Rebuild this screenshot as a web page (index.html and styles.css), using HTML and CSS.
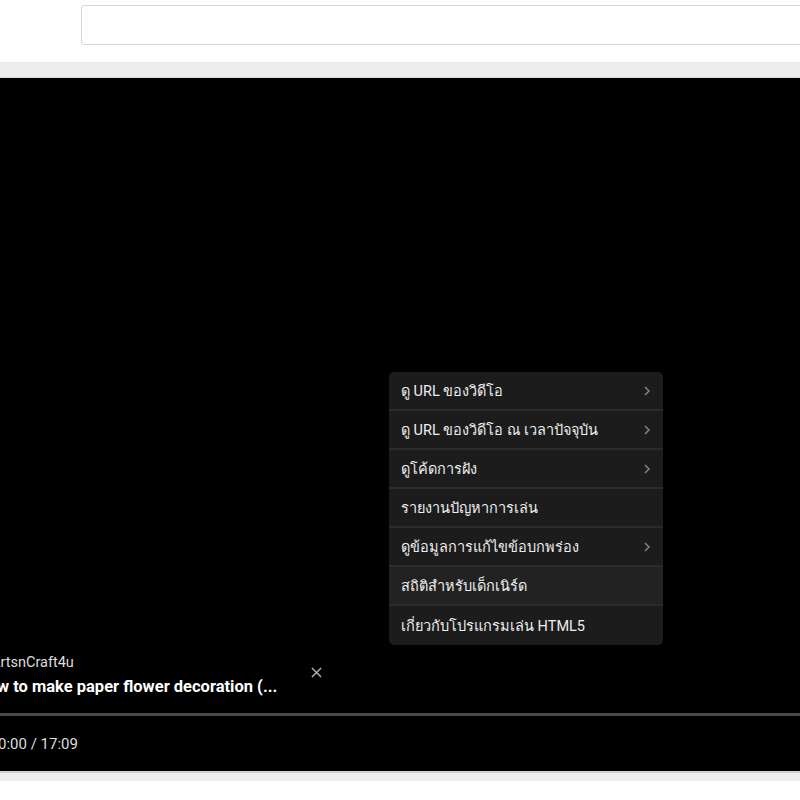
FILE: index.html
```html
<!DOCTYPE html>
<html lang="th">
<head>
<meta charset="utf-8">
<link rel="stylesheet" href="styles.css">
</head>
<body>
<div class="top">
  <div class="search"></div>
</div>
<div class="band"></div>
<div class="player">
  <div class="menu">
    <div class="item"><span>ดู URL ของวิดีโอ</span><svg class="chev" viewBox="0 0 8 12"><polyline points="2,2 6,6 2,10"/></svg></div>
    <div class="item"><span>ดู URL ของวิดีโอ ณ เวลาปัจจุบัน</span><svg class="chev" viewBox="0 0 8 12"><polyline points="2,2 6,6 2,10"/></svg></div>
    <div class="item"><span>ดูโค้ดการฝัง</span><svg class="chev" viewBox="0 0 8 12"><polyline points="2,2 6,6 2,10"/></svg></div>
    <div class="item"><span>รายงานปัญหาการเล่น</span></div>
    <div class="item"><span>ดูข้อมูลการแก้ไขข้อบกพร่อง</span><svg class="chev" viewBox="0 0 8 12"><polyline points="2,2 6,6 2,10"/></svg></div>
    <div class="item hover"><span>สถิติสำหรับเด็กเนิร์ด</span></div>
    <div class="item last"><span>เกี่ยวกับโปรแกรมเล่น HTML5</span></div>
  </div>
  <div class="info">
    <div class="texts">
      <div class="channel">ArtsnCraft4u</div>
      <div class="title">How to make paper flower decoration (...</div>
    </div>
    <svg class="close" viewBox="0 0 12 12"><path d="M1 1 L11 11 M11 1 L1 11"/></svg>
  </div>
  <div class="progress"></div>
  <div class="controls"><span class="time">0:00 / 17:09</span></div>
</div>
<div class="band2"></div>
</body>
</html>
```
FILE: styles.css
```css
html, body {
  margin: 0;
  padding: 0;
  background: #ffffff;
  font-family: Roboto, "Noto Sans", "DejaVu Sans", sans-serif;
  overflow: hidden;
}
.top {
  height: 62px;
  padding: 5px 0 0 81px;
  box-sizing: border-box;
}
.search {
  height: 40px;
  margin-right: -20px;
  border: 1px solid #d6d6d6;
  border-radius: 3px;
  background: #fff;
  box-sizing: border-box;
}
.band {
  height: 16px;
  background: #ededed;
  border-bottom: 1px solid #dcdcdc;
  box-sizing: border-box;
}
.player {
  position: relative;
  height: 693px;
  background: #000;
  display: flex;
  flex-direction: column;
  justify-content: flex-end;
  overflow: hidden;
}
.menu {
  position: absolute;
  left: 389px;
  top: 294px;
  width: 274px;
  background: #1c1c1c;
  border-radius: 5px;
  overflow: hidden;
}
.item {
  height: 39px;
  display: flex;
  align-items: center;
  justify-content: space-between;
  padding: 0 12px 0 12px;
  border-bottom: 2px solid #2b2b2b;
  box-sizing: border-box;
  color: #eeeeee;
  font-size: 14.5px;
}
.item.hover {
  background: #222222;
}
.item.last {
  border-bottom: none;
}
.chev {
  width: 8px;
  height: 12px;
  fill: none;
  stroke: #8a8a8a;
  stroke-width: 1.4;
}
.info {
  display: flex;
  align-items: flex-start;
  height: 52px;
  margin-bottom: 10px;
}
.texts {
  width: 311px;
}
.channel {
  color: #dddddd;
  font-size: 14.5px;
  line-height: 22px;
  margin-left: -9px;
  margin-top: 1px;
}
.title {
  color: #ffffff;
  font-size: 16.5px;
  font-weight: 700;
  line-height: 23px;
  white-space: nowrap;
  margin-left: -24px;
  margin-top: 1px;
}
.close {
  width: 11px;
  height: 11px;
  margin-top: 16px;
  stroke: #b0b0b0;
  stroke-width: 1.6;
}
.progress {
  height: 3px;
  background: #4a4a4a;
}
.controls {
  height: 55px;
  display: flex;
  align-items: center;
}
.time {
  color: #dddddd;
  font-size: 15px;
  margin-left: -2px;
  margin-top: 1px;
}
.band2 {
  height: 10px;
  background: #ececec;
  border-top: 2px solid #d0d0d0;
  box-sizing: border-box;
}
```
